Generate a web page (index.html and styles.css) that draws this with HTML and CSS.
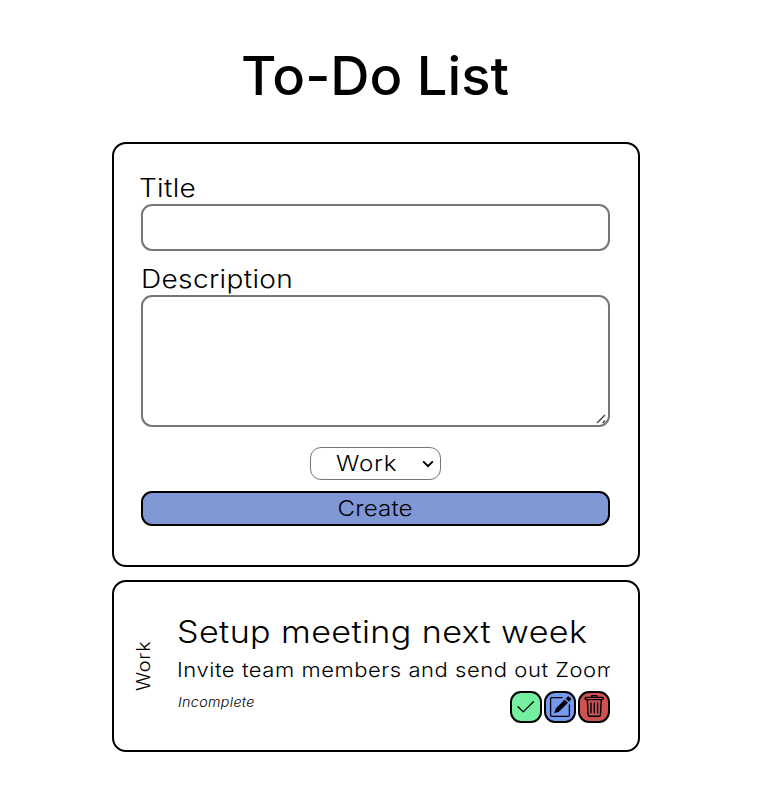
FILE: index.html
```html
<!DOCTYPE html>
<html lang="en">
<head>
<meta charset="utf-8">
<title>To-Do List</title>
<link rel="stylesheet" href="styles.css">
</head>
<body>
<main class="app">
  <h1 class="heading">To-Do List</h1>
  <form class="card form">
    <label class="label label-title" for="title"><span class="wide">Title</span></label>
    <input class="field title-field" id="title" type="text">
    <label class="label label-description" for="description"><span class="wide">Description</span></label>
    <div class="description-wrap">
      <textarea class="field description-field" id="description"></textarea>
      <svg class="grip" viewBox="0 0 10 10"><path d="M1 9 9 1M6.6 9 9 6.6"/></svg>
    </div>
    <div class="select-wrap">
      <span class="category wide">Work</span>
      <svg class="chevron" viewBox="0 0 12 8"><path d="M1.2 1.4 6 6.1l4.8-4.7"/></svg>
    </div>
    <button class="create" type="button"><span class="wide centered">Create</span></button>
  </form>
  <article class="card task">
    <div class="tag"><span>Work</span></div>
    <div class="content">
      <h2 class="task-title"><span class="wide">Setup meeting next week</span></h2>
      <p class="task-text"><span class="wide">Invite team members and send out Zoom</span></p>
      <div class="footer">
        <em class="status"><span class="wide">Incomplete</span></em>
        <div class="actions">
          <button class="action done" type="button" aria-label="Complete"><svg viewBox="0 0 28 28"><path class="line" d="m6 13.7 5.2 5.2L21.4 8.7"/></svg></button>
          <button class="action edit" type="button" aria-label="Edit"><svg viewBox="0 0 28 28"><path class="line" d="M16.3 4.6H6.1q-1.5 0-1.5 1.5v15.8q0 1.5 1.5 1.5h15.8q1.5 0 1.5-1.5V12"/><path d="m8.2 20.2 1.5-4.7 9-9 3.2 3.2-9 9zM19.7 5.5l1.8-1.8q.8-.8 1.6 0l1.6 1.6q.8.8 0 1.6l-1.8 1.8z"/></svg></button>
          <button class="action remove" type="button" aria-label="Delete"><svg viewBox="0 0 28 28"><path class="line thick" d="M6.3 4.4h15.9q1.2 0 1.2 1.1t-1.2 1.1H6.3q-1.2 0-1.2-1.1t1.2-1.1zM11.8 3.5V2.6h5v.9M7.4 7.4l.7 14.2q.1 1.7 1.7 1.7h9q1.6 0 1.7-1.7l.7-14.2M11 10v9.7M14.3 10v9.7M17.6 10v9.7"/></svg></button>
        </div>
      </div>
    </div>
  </article>
</main>
</body>
</html>
```
FILE: styles.css
```css
* { box-sizing: border-box; }
body {
  margin: 0;
  background: #fff;
  color: #000;
  font-family: Inter, "Open Sans", sans-serif;
  font-weight: 280;
}
.app { width: 528px; margin: 0 0 0 112px; }

/* Widened letterforms for the light text */
.wide {
  display: inline-block;
  transform: scaleX(1.1);
  transform-origin: left center;
  white-space: nowrap;
}
.centered { transform-origin: center; }

.heading {
  margin: 0;
  padding-top: 43px;
  height: 142px;
  font-size: 53px;
  line-height: 66px;
  font-weight: 460;
  letter-spacing: 0;
  text-align: center;
  white-space: nowrap;
  transform: translateX(-1px) scaleX(1.025);
}
.card { border: 2px solid #000; border-radius: 14px; background: #fff; }
.form {
  display: flex;
  flex-direction: column;
  height: 425px;
  margin: 0;
  padding: 28px 28px 0 27px;
}
.label { font-size: 25.5px; line-height: 32px; height: 32px; letter-spacing: .3px; }
.label-title { text-indent: -1px; }
.label-description { margin-top: 12px; margin-bottom: 1px; }
.field {
  display: block;
  width: 100%;
  margin: 0;
  border: 2px solid #767676;
  border-radius: 11px;
  background: #fff;
}
.title-field { height: 47px; }
.description-wrap { position: relative; margin-top: -1px; }
.description-field { height: 132px; resize: none; }
.grip {
  position: absolute;
  right: 4px;
  bottom: 3px;
  width: 10px;
  height: 10px;
  fill: none;
  stroke: #484848;
  stroke-width: 1.5;
}
.select-wrap {
  display: flex;
  align-items: center;
  justify-content: space-between;
  align-self: center;
  width: 131px;
  height: 33px;
  margin-top: 20px;
  padding: 0 6px 0 25px;
  border: 1px solid #767676;
  border-radius: 11px;
  font-size: 22px;
  line-height: 29px;
}
.category { letter-spacing: .7px; margin-top: -1px; }
.chevron { width: 12px; height: 8px; fill: none; stroke: #000; stroke-width: 2; }
.create {
  height: 35px;
  margin-top: 11px;
  padding: 0;
  border: 2px solid #000;
  border-radius: 11px;
  background: #8097d5;
  color: #000;
  font: 280 22px/31px Inter, sans-serif;
  letter-spacing: .1px;
}
.task { display: flex; height: 172px; margin-top: 13px; padding: 29px 28px 0 19px; }
.tag { width: 44px; height: 110px; display: flex; align-items: center; }
.tag span {
  writing-mode: vertical-rl;
  transform: rotate(180deg) scaleY(1.1);
  font-size: 18px;
  line-height: 22px;
  letter-spacing: .6px;
}
.content { flex: 1; min-width: 0; }
.task-title { margin: 0; font-size: 31px; line-height: 42px; font-weight: 280; letter-spacing: .35px; white-space: nowrap; }
.task-text { margin: 0; height: 34px; font-size: 20px; line-height: 34px; letter-spacing: .5px; overflow: hidden; }
.footer { display: flex; justify-content: space-between; margin-top: 4px; }
.status { font-size: 13px; line-height: 22px; padding-left: 1px; letter-spacing: .3px; }
.actions { display: flex; gap: 2px; }
.action { width: 32px; height: 32px; padding: 0; border: 2px solid #000; border-radius: 11px; }
.action svg { display: block; width: 28px; height: 28px; }
.line { fill: none; stroke: #000; stroke-width: 1.3; stroke-linecap: round; stroke-linejoin: round; }
.thick { stroke-width: 1.4; }
.done { background: #75f0a0; }
.edit { background: #739af0; }
.remove { background: #cd5353; }
```
